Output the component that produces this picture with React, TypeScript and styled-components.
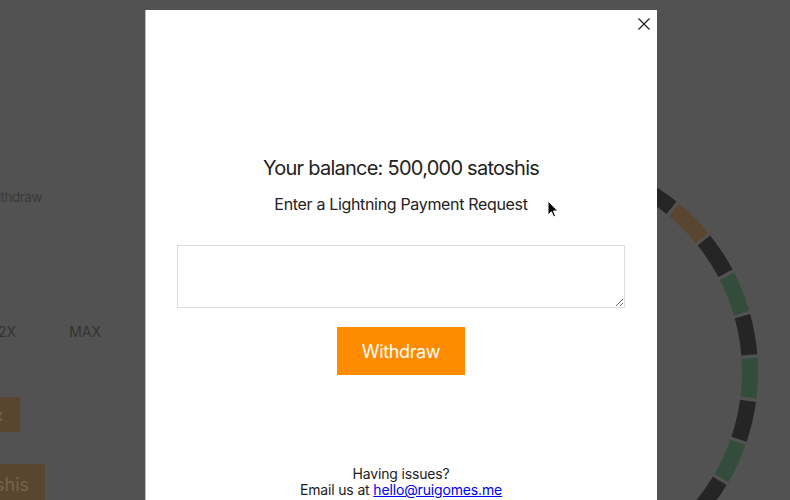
import React from 'react';
import styled, { createGlobalStyle } from 'styled-components';

const GlobalStyle = createGlobalStyle`
  html, body {
    margin: 0;
    padding: 0;
  }
  body {
    background: #525252;
    font-family: Inter, "Noto Sans", sans-serif;
    overflow: hidden;
  }
`;

const Page = styled.div`
  display: flex;
  align-items: flex-start;
  width: 790px;
  height: 500px;
  overflow: hidden;
`;

const Sidebar = styled.div`
  display: flex;
  flex-direction: column;
  align-items: flex-start;
  flex-shrink: 0;
  width: 118px;
  padding-top: 187px;
`;

// right-aligned strip: content that does not fit spills off the left edge
const Edge = styled.div<{ $right: number; $top: number; $gap?: number }>`
  display: flex;
  justify-content: flex-end;
  align-items: center;
  width: ${p => p.$right}px;
  margin-top: ${p => p.$top}px;
  gap: ${p => p.$gap ?? 0}px;
`;

const Label = styled.span`
  flex-shrink: 0;
  font-size: 13.5px;
  line-height: 20px;
  letter-spacing: -0.5px;
  color: #3a3a3a;
  white-space: nowrap;
`;

const Field = styled.div`
  flex-shrink: 0;
  width: 260px;
  height: 53px;
  box-sizing: border-box;
  border: 1px solid #4e4e4e;
  background: #515151;
`;

const Multiplier = styled.span`
  flex-shrink: 0;
  font-size: 14px;
  line-height: 20px;
  color: #333;
`;

const BetButton = styled.div<{ $height: number; $size: number; $pad: number }>`
  flex-shrink: 0;
  display: flex;
  align-items: center;
  height: ${p => p.$height}px;
  padding: 0 ${p => p.$pad}px;
  background: #5a4630;
  color: #76654e;
  font-size: ${p => p.$size}px;
  white-space: nowrap;
`;

const WheelArt = styled.svg`
  flex-shrink: 0;
  margin-left: 201px;
  margin-top: 152px;
`;

const Modal = styled.div`
  position: fixed;
  top: 10px;
  left: 145px;
  width: 512px;
  height: 520px;
  box-sizing: border-box;
  padding: 146px 32px 0 31px;
  border-left: 1px solid #bdbdbd;
  background: #fff;
  color: #222;
  display: flex;
  flex-direction: column;
  align-items: center;
`;

const Close = styled.button`
  position: absolute;
  top: 8px;
  right: 7px;
  width: 12px;
  height: 12px;
  padding: 0;
  border: none;
  background: none;
  display: flex;
`;

const Title = styled.h2`
  margin: 0;
  font-size: 20px;
  line-height: 24px;
  font-weight: 400;
  letter-spacing: -0.75px;
  white-space: nowrap;
`;

const Prompt = styled.p`
  margin: 14px 0 0;
  font-size: 16px;
  line-height: 20px;
  letter-spacing: -0.33px;
`;

const Request = styled.textarea`
  margin-top: 31px;
  width: 100%;
  height: 63px;
  box-sizing: border-box;
  border: 1px solid #dcdcdc;
  outline: none;
  resize: vertical;
  font-family: inherit;
`;

const WithdrawButton = styled.button`
  margin-top: 19px;
  width: 128px;
  height: 48px;
  border: none;
  border-radius: 0;
  background: #ff8c00;
  color: #fff;
  font-family: inherit;
  font-size: 18px;
  letter-spacing: -0.35px;
`;

const Help = styled.div`
  margin-top: 91px;
  font-size: 14px;
  line-height: 16px;
  letter-spacing: -0.15px;
  text-align: center;
`;

const Mail = styled.a`
  color: #0000ee;
  text-decoration: underline;
`;

const Pointer = styled.svg`
  position: fixed;
  left: 547px;
  top: 200px;
`;

const CX = 220;
const CY = 220;
const R = 211;
const COUNT = 31;
const STEP = 360 / COUNT;
const GAP = 0.9;

const point = (deg: number) => {
  const a = (deg * Math.PI) / 180;
  return `${(CX + R * Math.cos(a)).toFixed(2)} ${(CY + R * Math.sin(a)).toFixed(2)}`;
};

const segmentColor = (k: number) => {
  if (k === -4) return '#5a4630';
  return k % 2 === 0 ? '#334c3b' : '#252525';
};

const Wheel = () => {
  const segments = [];
  for (let k = -15; k <= 15; k++) {
    const mid = 1.6 + k * STEP;
    const from = mid - (STEP - GAP) / 2;
    const to = mid + (STEP - GAP) / 2;
    segments.push(
      <path
        key={k}
        d={`M ${point(from)} A ${R} ${R} 0 0 1 ${point(to)}`}
        fill="none"
        stroke={segmentColor(k)}
        strokeWidth={16}
      />
    );
  }
  return (
    <WheelArt width={440} height={440} viewBox="0 0 440 440">
      {segments}
    </WheelArt>
  );
};

const App = () => {
  return (
    <>
      <GlobalStyle />
      <Page>
        <Sidebar>
          <Edge $right={42} $top={0}>
            <Label>Withdraw</Label>
          </Edge>
          <Edge $right={118} $top={58}>
            <Field />
          </Edge>
          <Edge $right={101} $top={4} $gap={53}>
            <Multiplier>1/2X</Multiplier>
            <Multiplier>2X</Multiplier>
            <Multiplier>MAX</Multiplier>
          </Edge>
          <Edge $right={20} $top={55}>
            <BetButton $height={35} $size={16} $pad={17}>
              Roll 1x
            </BetButton>
          </Edge>
          <Edge $right={45} $top={32}>
            <BetButton $height={40} $size={18} $pad={16}>
              Deposit satoshis
            </BetButton>
          </Edge>
        </Sidebar>
        <Wheel />
      </Page>

      <Modal>
        <Close aria-label="Close">
          <svg width="12" height="12" viewBox="0 0 12 12">
            <path d="M0.5 0.5 L11.5 11.5 M11.5 0.5 L0.5 11.5" stroke="#222" strokeWidth="1.3" />
          </svg>
        </Close>
        <Title>Your balance: 500,000 satoshis</Title>
        <Prompt>Enter a Lightning Payment Request</Prompt>
        <Request />
        <WithdrawButton>Withdraw</WithdrawButton>
        <Help>
          Having issues?
          <br />
          Email us at <Mail href="mailto:hello@ruigomes.me">hello@ruigomes.me</Mail>
        </Help>
      </Modal>

      <Pointer width="12" height="18" viewBox="0 0 12 18">
        <path
          d="M1 1 L1 15 L4.4 11.8 L6.6 16.8 L8.6 15.9 L6.4 11 L10.8 11 Z"
          fill="#000"
          stroke="#fff"
          strokeWidth="1"
          strokeLinejoin="round"
        />
      </Pointer>
    </>
  );
};

export default App;
